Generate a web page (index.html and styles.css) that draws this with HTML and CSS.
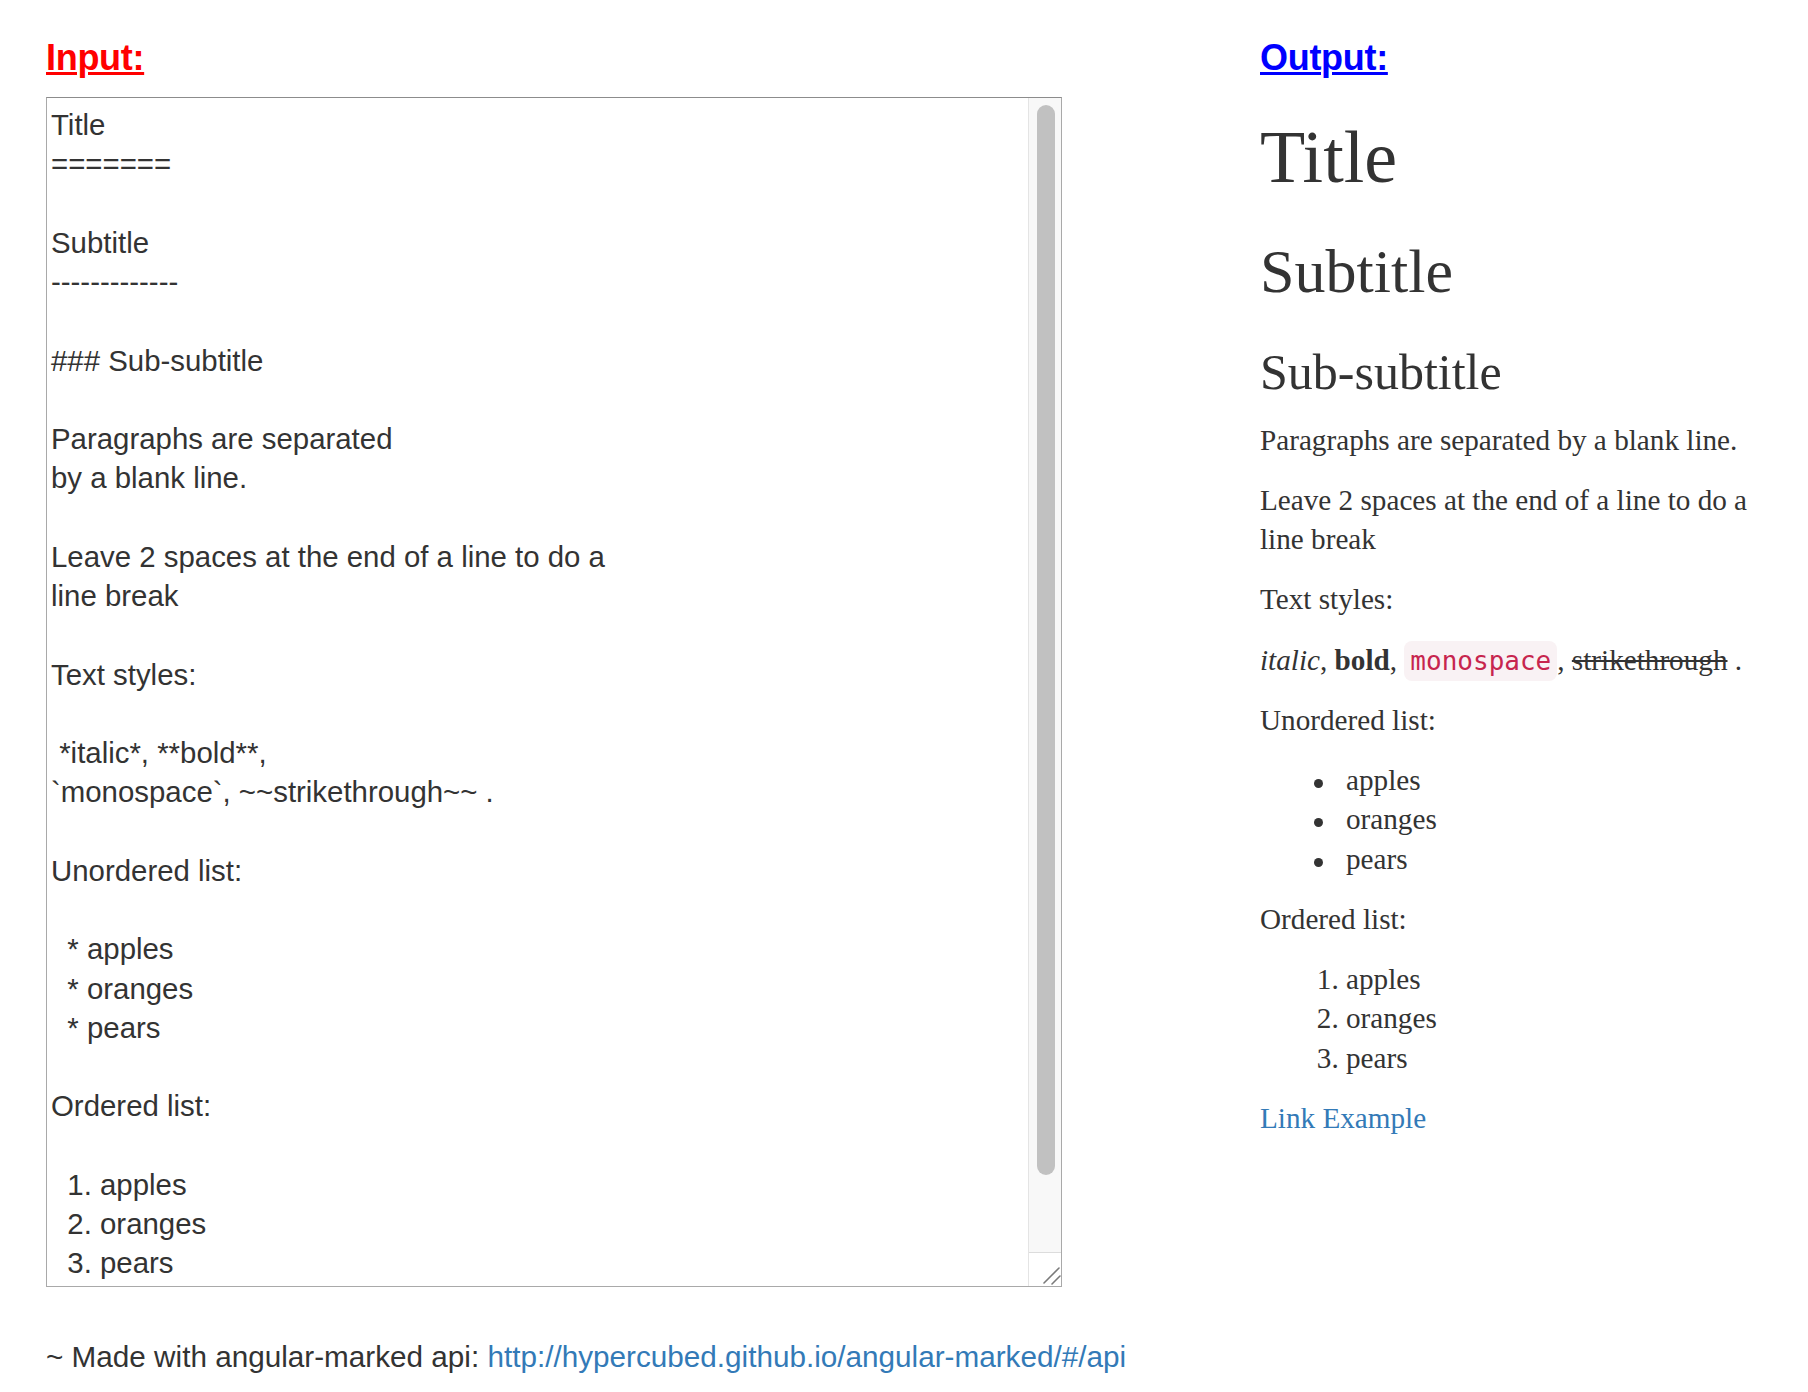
FILE: index.html
```html
<!DOCTYPE html>
<html lang="en">
<head>
<meta charset="utf-8">
<title>angular-marked demo</title>
<link rel="stylesheet" href="styles.css">
</head>
<body>
<div class="page">
  <div class="columns">
    <section class="col col-input">
      <h2 class="col-title title-input">Input:</h2>
      <div class="editor">
<pre class="editor-text">Title
=======

Subtitle
-------------

### Sub-subtitle

Paragraphs are separated
by a blank line.

Leave 2 spaces at the end of a line to do a
line break

Text styles:

 *italic*, **bold**,
`monospace`, ~~strikethrough~~ .

Unordered list:

  * apples
  * oranges
  * pears

Ordered list:

  1. apples
  2. oranges
  3. pears</pre>
        <div class="scrollbar">
          <div class="track"><div class="thumb"></div></div>
          <div class="resizer">
            <svg width="32" height="33" viewBox="0 0 32 33"><path d="M15 30 L30 15 M23 31 L31 23" stroke="#7a7a7a" stroke-width="1.6" stroke-linecap="round" fill="none"/></svg>
          </div>
        </div>
      </div>
    </section>
    <section class="col col-output">
      <h2 class="col-title title-output">Output:</h2>
      <div class="markdown">
        <h1>Title</h1>
        <h2>Subtitle</h2>
        <h3>Sub-subtitle</h3>
        <p>Paragraphs are separated by a blank line.</p>
        <p>Leave 2 spaces at the end of a line to do a<br>line break</p>
        <p>Text styles:</p>
        <p><em>italic</em>, <strong>bold</strong>, <code>monospace</code>, <del>strikethrough</del> .</p>
        <p>Unordered list:</p>
        <ul class="bullets">
          <li>apples</li>
          <li>oranges</li>
          <li>pears</li>
        </ul>
        <p>Ordered list:</p>
        <ol>
          <li>apples</li>
          <li>oranges</li>
          <li>pears</li>
        </ol>
        <p><a class="md-link" href="http://www.example.com">Link Example</a></p>
      </div>
    </section>
  </div>
  <p class="footer">~ Made with angular-marked api: <a class="footer-link" href="http://hypercubed.github.io/angular-marked/#/api">http://hypercubed.github.io/angular-marked/#/api</a></p>
</div>
</body>
</html>
```

FILE: styles.css
```css
* { box-sizing: border-box; }

html, body {
  margin: 0;
  background: #fff;
}

body {
  font-family: "Liberation Sans", Arial, sans-serif;
  color: #333;
}

.page {
  padding: 36px 0 0 46px;
}

.columns {
  display: grid;
  grid-template-columns: 1016px 1fr;
  column-gap: 198px;
}

.col-title {
  margin: 0;
  font-family: "Liberation Sans", Arial, sans-serif;
  font-size: 36px;
  line-height: 43px;
  font-weight: bold;
  letter-spacing: -0.3px;
  text-decoration: underline;
  text-decoration-thickness: 3px;
  text-underline-offset: 2px;
}

.title-input { color: #ff0000; }
.title-output { color: #0000ff; }

/* editor (textarea look) */
.editor {
  display: flex;
  margin-top: 18px;
  height: 1190px;
  border: 1px solid #a9a9a9;
  border-top-color: #8c8c8c;
  background: #fff;
}

.editor-text {
  flex: 1;
  margin: 0;
  padding: 7px 0 0 4px;
  overflow: hidden;
  font-family: "Liberation Sans", Arial, sans-serif;
  font-size: 29.4px;
  line-height: 39.25px;
  color: #333;
  white-space: pre;
}

.scrollbar {
  width: 33px;
  display: flex;
  flex-direction: column;
  border-left: 1px solid #e4e4e4;
}

.track {
  flex: 1;
  background: #f8f8f8;
  padding: 7px 6px 0 8px;
}

.thumb {
  height: 1070px;
  background: #c1c1c1;
  border-radius: 9px;
}

.resizer {
  height: 34px;
  background: #fff;
  border-top: 1px solid #dcdcdc;
}

.resizer svg { display: block; }

/* rendered markdown */
.markdown {
  font-family: "Liberation Serif", "Times New Roman", serif;
  font-size: 29.2px;
  line-height: 39.25px;
  color: #333;
}

.markdown h1,
.markdown h2,
.markdown h3 {
  font-weight: normal;
  line-height: 1.1;
  margin: 39px 0 21px;
}

.markdown h1 { font-size: 74px; margin-top: 38px; }
.markdown h2 { font-size: 62px; }
.markdown h3 { font-size: 50px; }

.markdown p { margin: 0 0 21px; }

.markdown ul,
.markdown ol {
  margin: 0 0 21px;
  padding-left: 86px;
}

.markdown .bullets {
  list-style: none;
}

.bullets li {
  position: relative;
}

.bullets li::before {
  content: "";
  position: absolute;
  left: -32px;
  top: 18px;
  width: 9px;
  height: 9px;
  border-radius: 50%;
  background: #333;
}

.markdown code {
  font-family: "DejaVu Sans Mono", "Liberation Mono", monospace;
  font-size: 26px;
  line-height: 1;
  color: #c7254e;
  background: #f9f2f4;
  padding: 5px 6px;
  border-radius: 8px;
}

.md-link {
  color: #337ab7;
  text-decoration: none;
}

.footer {
  margin: 50px 0 0;
  font-family: "Liberation Sans", Arial, sans-serif;
  font-size: 29.7px;
  line-height: 39.25px;
  color: #333;
}

.footer-link {
  color: #337ab7;
  text-decoration: none;
}
```
